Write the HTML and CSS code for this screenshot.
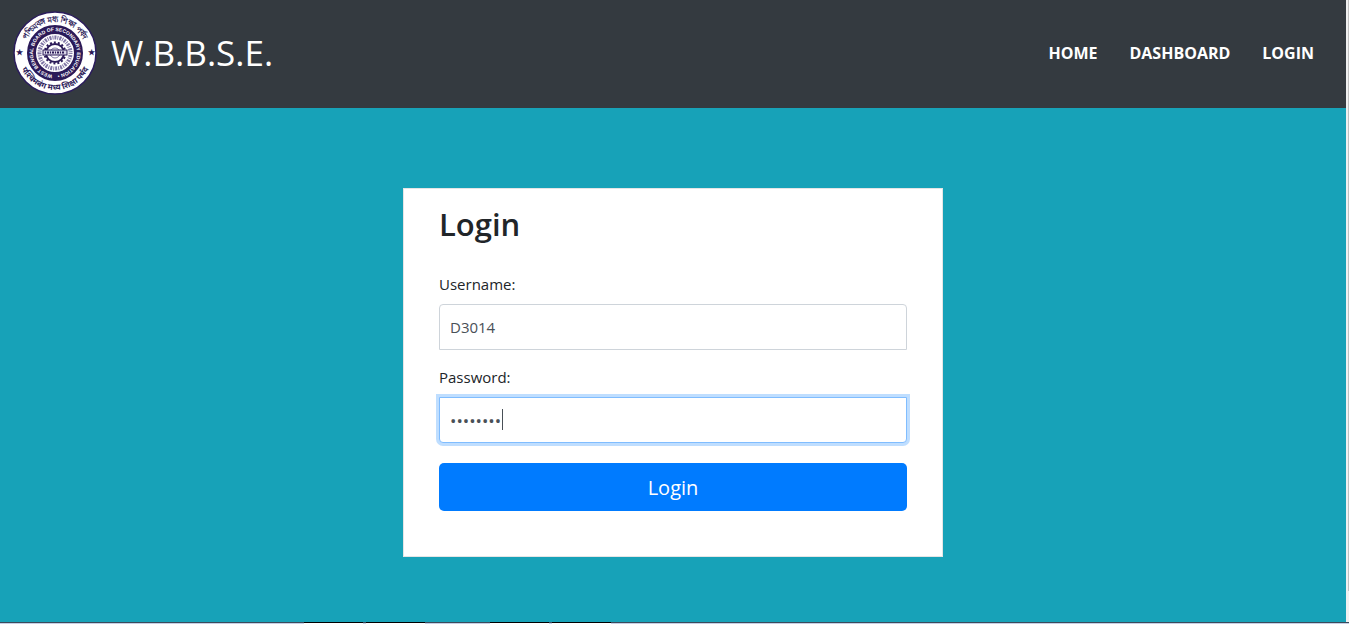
FILE: index.html
```html
<!DOCTYPE html>
<html lang="en">
<head>
    <meta charset="UTF-8" />
    <meta name="viewport" content="width=device-width, initial-scale=1.0"/>
    <title>W.B.B.S.E. | Login</title>
    <link rel="stylesheet" href="styles.css">
</head>
<body>

<div class="viewport">
    <div class="page">
        <header class="navbar">
            <a class="brand" href="#">
                <svg class="logo" viewBox="-42 -42 84 84" role="img" aria-label="West Bengal Board of Secondary Education">
                    <defs>
                        <path id="ring-top" d="M-31 0A31 31 0 0 1 31 0"/>
                        <path id="ring-bottom" d="M-37 0A37 37 0 0 0 37 0"/>
                        <path id="ring-name" d="M0 22A22 22 0 0 1 0 -22A22 22 0 0 1 0 22"/>
                    </defs>
                    <circle r="41" fill="#fff" stroke="#2b1c5c" stroke-width="1.5"/>
                    <circle r="23.5" fill="none" stroke="#2b1a58" stroke-width="9"/>
                    <g class="ring-text">
                        <text><textPath href="#ring-top" startOffset="50%">পশ্চিমবঙ্গ মধ্য শিক্ষা পর্ষদ</textPath></text>
                        <text><textPath href="#ring-bottom" startOffset="50%">पश्चिमबंग मध्य शिक्षा पर्षद</textPath></text>
                        <text x="-36" y="2">★</text>
                        <text x="36" y="2">★</text>
                    </g>
                    <text class="ring-name"><textPath href="#ring-name" startOffset="50%">WEST BENGAL BOARD OF SECONDARY EDUCATION •</textPath></text>
                    <circle r="15.5" fill="none" stroke="#8177a6" stroke-width="4" stroke-dasharray="1 1 2 1"/>
                    <circle r="10.5" fill="none" stroke="#2b1a58" stroke-width="2" stroke-dasharray="2 2"/>
                    <circle r="9" fill="#fff" stroke="#2b1a58" stroke-width="2"/>
                    <circle r="5" fill="none" stroke="#8177a6" stroke-width="1"/>
                    <rect x="-12" y="-3" width="24" height="5" fill="#d8d4e6" stroke="#2b1a58"/>
                    <path d="M-10 -.5H10" stroke="#2b1a58" stroke-width="2" stroke-dasharray="1 1 2 1"/>
                </svg>
                <span>W.B.B.S.E.</span>
            </a>
            <nav class="menu">
                <a href="#">HOME</a>
                <a href="#">DASHBOARD</a>
                <a href="#">LOGIN</a>
            </nav>
        </header>

        <main>
            <form class="card">
                <h2>Login</h2>
                <label for="username">Username:</label>
                <input class="first" type="text" id="username" value="D3014">
                <label for="password">Password:</label>
                <div class="field">
                    <input class="last" type="password" id="password" value="12345678" autofocus>
                    <span class="caret"></span>
                </div>
                <button type="submit">Login</button>
            </form>
        </main>
    </div>
    <div class="scrollbar"><div class="thumb"></div></div>
</div>

<div class="taskbar">
    <div class="task"></div>
    <div class="task"></div>
    <div class="task second"></div>
    <div class="task"></div>
</div>

</body>
</html>
```

FILE: styles.css
```css
* {
    box-sizing: border-box;
}

body {
    margin: 0;
    min-height: 100vh;
    display: flex;
    flex-direction: column;
    font-family: "Open Sans", "Noto Sans", sans-serif;
    font-size: 15px;
    line-height: 24px;
    color: #212529;
}

.viewport {
    flex: 1;
    display: flex;
}

.page {
    flex: 1;
    display: flex;
    flex-direction: column;
    background-color: #17a2b8;
}

.navbar {
    display: flex;
    align-items: center;
    justify-content: space-between;
    padding: 11px 16px 13px 13px;
    background-color: #343a40;
}

.brand {
    display: flex;
    align-items: center;
    gap: 14px;
    color: white;
    font-size: 35px;
    line-height: 48px;
    text-decoration: none;
}

.logo {
    width: 84px;
    height: 84px;
}

.ring-text {
    font-size: 8px;
    font-weight: bold;
    fill: #2b1a58;
    text-anchor: middle;
}

.ring-name {
    font-family: "Liberation Sans Narrow", "Liberation Sans", sans-serif;
    font-size: 5px;
    font-weight: bold;
    fill: white;
    text-anchor: middle;
}

.menu {
    display: flex;
}

.menu a {
    padding: 8px 16px;
    color: white;
    font-size: 16px;
    font-weight: bold;
    text-decoration: none;
}

main {
    padding: 80px 16px 60px;
}

.card {
    max-width: 540px;
    margin: 0 auto;
    padding: 16px 35px 45px;
    background-color: white;
    border: 1px solid #e5e5e5;
}

h2 {
    margin: 0 0 28px;
    font-size: 31px;
    font-weight: 600;
    line-height: 39px;
}

label {
    display: block;
    margin-bottom: 8px;
}

input {
    display: block;
    width: 100%;
    height: 46px;
    padding: 10px;
    border: 1px solid #ced4da;
    font: inherit;
    color: #495057;
}

.first {
    margin-bottom: 15px;
    border-radius: 4px 4px 0 0;
}

.field {
    position: relative;
    margin-bottom: 20px;
}

.last {
    border-radius: 0 0 4px 4px;
    font-size: 17px;
    caret-color: transparent;
}

.caret {
    position: absolute;
    top: 12px;
    left: 63px;
    width: 1px;
    height: 21px;
    background-color: #495057;
}

input:focus {
    border-color: #80bdff;
    outline: 0;
    box-shadow: 0 0 0 3px #bfdeff;
}

button {
    width: 100%;
    height: 48px;
    border: none;
    border-radius: 5px;
    background-color: #007bff;
    color: white;
    font-family: inherit;
    font-size: 20px;
    cursor: pointer;
}

.scrollbar {
    width: 3px;
    padding-left: 2px;
    background-color: #f1f1f1;
}

.thumb {
    height: 95%;
    background-color: #c1c1c1;
}

.taskbar {
    display: flex;
    gap: 3px;
    height: 2px;
    padding-left: 304px;
    background-color: #c5cfe5;
    border-top: 1px solid #3c4a5a;
}

.task {
    width: 59px;
    margin-top: -1px;
    background-color: white;
    border-top: 1px solid black;
}

.second {
    margin-left: 62px;
}
```
